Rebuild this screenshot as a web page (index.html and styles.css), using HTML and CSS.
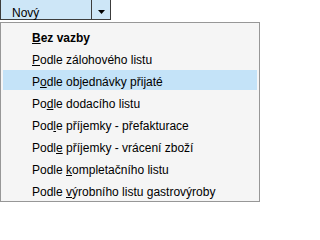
FILE: index.html
```html
<!DOCTYPE html>
<html lang="cs">
<head>
<meta charset="utf-8">
<link rel="stylesheet" href="styles.css">
</head>
<body>
<div class="combo">
  <span class="value">Nový</span>
  <span class="btn"><svg width="7" height="4" viewBox="0 0 7 4"><path d="M0 0H7L3.5 4Z" fill="#000"/></svg></span>
</div>
<ul class="menu">
  <li class="item bold"><u>B</u>ez vazby</li>
  <li class="item"><u>P</u>odle zálohového listu</li>
  <li class="item active">P<u>o</u>dle objednávky přijaté</li>
  <li class="item">Po<u>d</u>le dodacího listu</li>
  <li class="item">Pod<u>l</u>e příjemky - přefakturace</li>
  <li class="item">Podl<u>e</u> příjemky - vrácení zboží</li>
  <li class="item">Podle <u>k</u>ompletačního listu</li>
  <li class="item">Podle <u>v</u>ýrobního listu gastrovýroby</li>
</ul>
</body>
</html>
```
FILE: styles.css
```css
* { box-sizing: border-box; }
html, body { margin: 0; padding: 0; background: #fff; }
body {
  font-family: "Liberation Sans", Arial, sans-serif;
  font-size: 12px;
  color: #000;
  width: 261px;
  height: 204px;
  overflow: hidden;
}
.combo {
  display: flex;
  width: 111px;
  height: 20px;
  background: #cde6f7;
  border: 1px solid #3c3c3c;
  border-top: none;
}
.value {
  flex: 1;
  padding: 7px 0 0 11px;
  line-height: 12px;
}
.btn {
  width: 19px;
  border-left: 1px solid #3c3c3c;
  display: flex;
  justify-content: center;
  align-items: flex-start;
  padding-top: 10px;
}
.btn svg { display: block; }
.menu {
  list-style: none;
  margin: 2px 0 0 0;
  padding: 3px 2px 1px 2px;
  width: 260px;
  border: 1px solid #979797;
  background: #f5f5f5;
  display: flex;
  flex-direction: column;
  gap: 2px;
}
.item {
  height: 20px;
  padding: 5px 0 0 29px;
  line-height: 14px;
  white-space: nowrap;
}
.item u { text-decoration: underline; text-underline-offset: 1px; }
.bold { font-weight: bold; }
.active { background: #c4e3f8; }
```
